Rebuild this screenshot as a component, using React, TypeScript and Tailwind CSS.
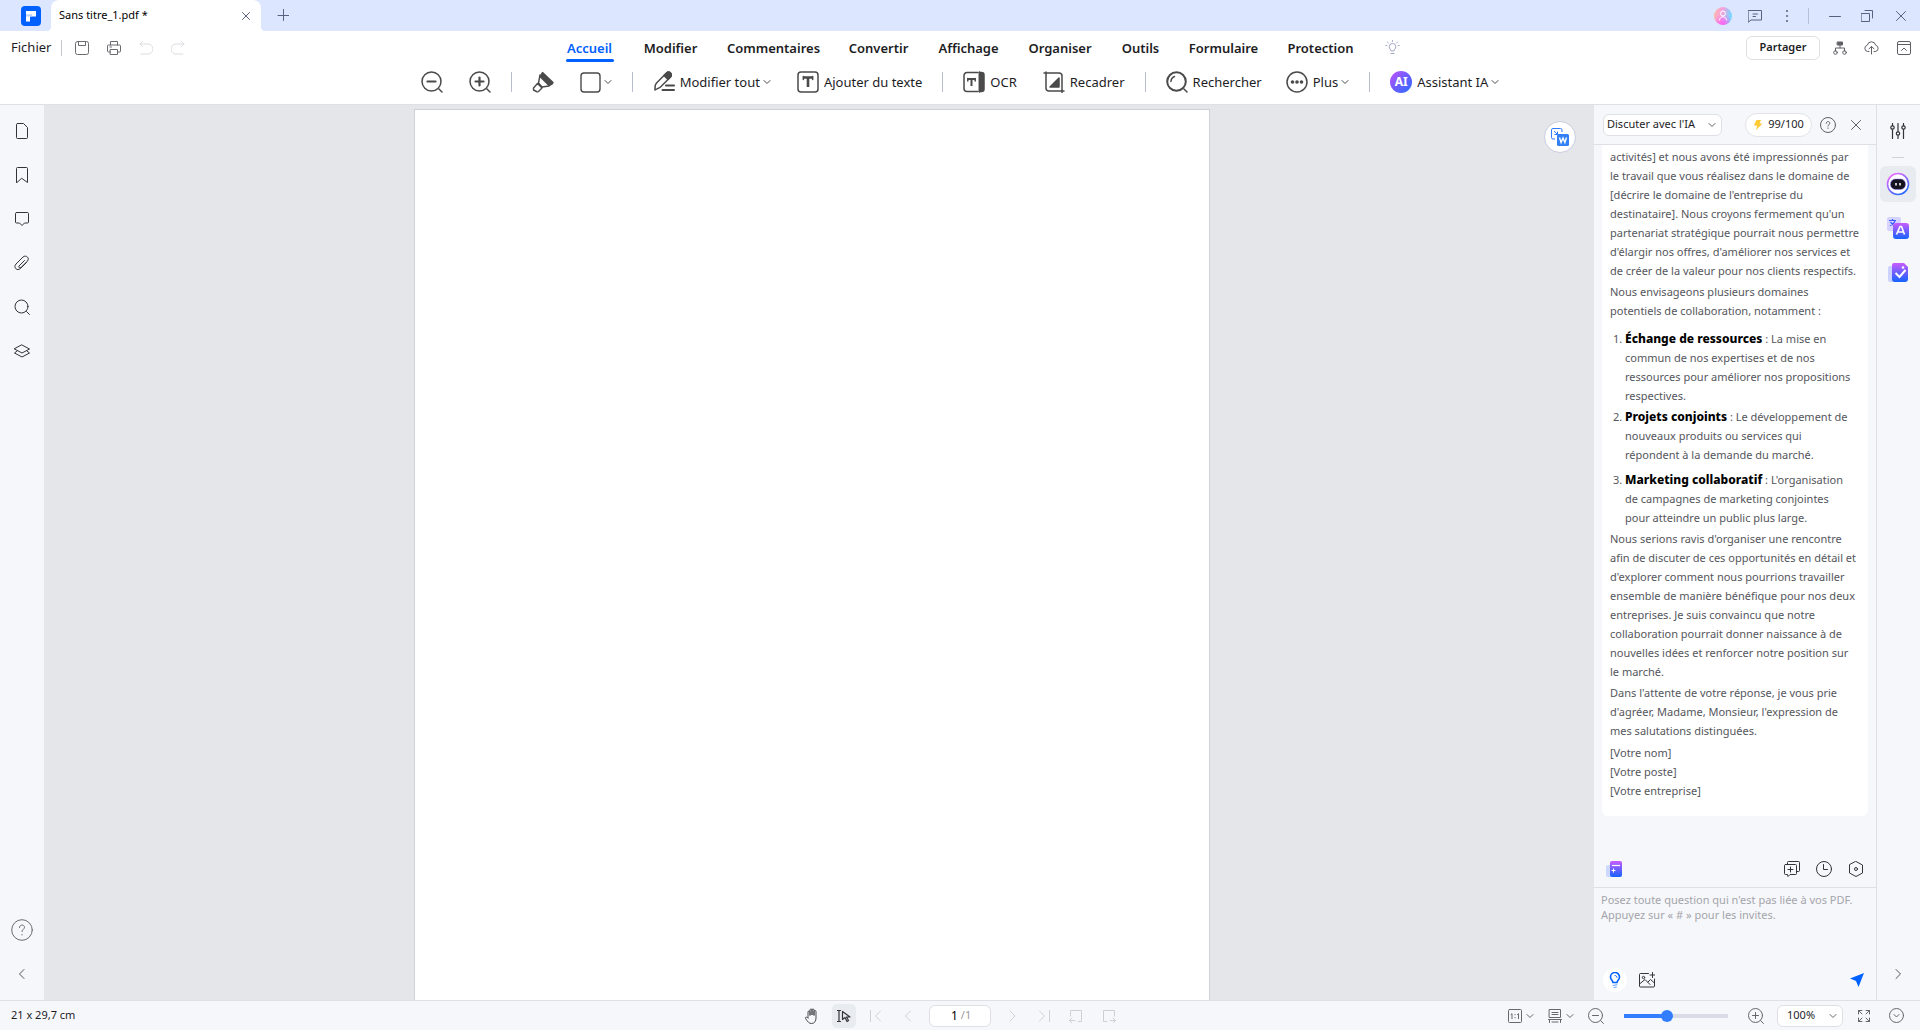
import React from "react";

type IconProps = {
  size?: number;
  box?: number;
  sw?: number;
  className?: string;
  children: React.ReactNode;
};

function Icon({ size = 16, box, sw = 1, className = "", children }: IconProps) {
  const b = box ?? size;
  return (
    <svg
      width={size}
      height={size}
      viewBox={`0 0 ${b} ${b}`}
      fill="none"
      stroke="currentColor"
      strokeWidth={sw}
      strokeLinecap="round"
      strokeLinejoin="round"
      className={`block shrink-0 ${className}`}
      aria-hidden="true"
    >
      {children}
    </svg>
  );
}

function Chevron({ className = "" }: { className?: string }) {
  return (
    <Icon size={8} className={className}>
      <path d="M1 2.5 4 5.5 7 2.5" />
    </Icon>
  );
}

type ToolProps = { label: string; text?: string; menu?: boolean; children: React.ReactNode };

function Tool({ label, text, menu, children }: ToolProps) {
  return (
    <button type="button" aria-label={label} className="flex h-8 items-center whitespace-nowrap text-[#4a4a4a]">
      {children}
      {text && <span className="ml-[5px] text-[13px] leading-5 text-[#1d1d1f]">{text}</span>}
      {menu && <Chevron className="ml-[3px]" />}
    </button>
  );
}

function Separator() {
  return <div className="h-5 w-px bg-[#b9bdcb]" />;
}

const tabs: { name: string; width: string }[] = [
  { name: "Accueil", width: "w-[77px]" },
  { name: "Modifier", width: "w-[85px]" },
  { name: "Commentaires", width: "w-[121px]" },
  { name: "Convertir", width: "w-[89px]" },
  { name: "Affichage", width: "w-[91px]" },
  { name: "Organiser", width: "w-[92px]" },
  { name: "Outils", width: "w-[69px]" },
  { name: "Formulaire", width: "w-[97px]" },
  { name: "Protection", width: "w-[97px]" },
];

function TitleBar() {
  return (
    <header className="flex h-[31px] shrink-0 items-stretch bg-[#dde6ff] text-[#596080]">
      <div className="flex w-[51px] items-center justify-end pr-[10px]">
        <svg width="20" height="20" viewBox="0 0 20 20" aria-label="PDFelement" className="mt-px">
          <rect width="20" height="20" rx="4" fill="#0061ff" />
          <path d="M5 5h10v5.500H9v5H5z" fill="#fff" />
          <path d="M5 8.300h6v2.200H5z" fill="#b9d2ff" />
        </svg>
      </div>
      <div className="relative flex w-[210px] items-center justify-between rounded-t-lg bg-white pl-2 pr-[9px]">
        <span className="absolute bottom-0 -left-1 h-1 w-1 bg-[radial-gradient(circle_at_0_0,#dde6ff_4px,white_4px)]" />
        <span className="absolute bottom-0 -right-1 h-1 w-1 bg-[radial-gradient(circle_at_100%_0,#dde6ff_4px,white_4px)]" />
        <span className="text-[11px] text-black">Sans titre_1.pdf *</span>
        <button type="button" aria-label="Fermer l'onglet">
          <Icon size={12}><path d="m2.500 2.500 7 7m0-7-7 7" /></Icon>
        </button>
      </div>
      <button type="button" aria-label="Nouvel onglet" className="ml-4 pb-px">
        <Icon size={12}><path d="M6.500 .5v11M1 6.500h11" /></Icon>
      </button>
      <div className="ml-auto flex items-center pr-[13px]">
        <button type="button" aria-label="Compte">
          <svg width="18" height="18" viewBox="0 0 18 18" fill="none">
            <defs>
              <linearGradient id="av" x1="0" y1="0" x2="1" y2="0.2">
                <stop offset="0" stopColor="#ffb9a0" />
                <stop offset="0.5" stopColor="#f5a0e0" />
                <stop offset="1" stopColor="#78d8ff" />
              </linearGradient>
              <radialGradient id="av2" cx="0.5" cy="1" r="0.6">
                <stop offset="0" stopColor="#ff5cf4" />
                <stop offset="1" stopColor="#ff5cf4" stopOpacity="0" />
              </radialGradient>
            </defs>
            <circle cx="9" cy="9" r="9" fill="url(#av)" />
            <circle cx="9" cy="9" r="9" fill="url(#av2)" />
            <circle cx="9" cy="6.500" r="2.500" stroke="#fff" />
            <path d="M5.500 13c0-4.500 7-4.500 7 0" stroke="#fff" strokeLinecap="round" />
          </svg>
        </button>
        <button type="button" aria-label="Messages" className="ml-4">
          <Icon size={14}>
            <path d="M.5 1.500h13v9.500H3L.5 13zM5 5h4.500M5 7.500h2.500" />
          </Icon>
        </button>
        <button type="button" aria-label="Menu" className="ml-[17px]">
          <Icon size={16}>
            <g fill="currentColor" stroke="none">
              <rect x="7" y="2" width="2" height="2" rx="1" /><rect x="7" y="7" width="2" height="2" rx="1" /><rect x="7" y="12" width="2" height="2" rx="1" />
            </g>
          </Icon>
        </button>
        <div className="ml-[13px] h-4 w-px bg-[#b9bfd6]" />
        <button type="button" aria-label="Réduire" className="ml-5">
          <Icon size={12}><path d="M.5 6.500h11" /></Icon>
        </button>
        <button type="button" aria-label="Restaurer" className="ml-5">
          <Icon size={12}>
            <path d="M.5 3.500h8v8h-8zM4 .5h7.500V8" />
          </Icon>
        </button>
        <button type="button" aria-label="Fermer" className="ml-[22px]">
          <Icon size={12}><path d="m1.500 1.500 9 9m0-9-9 9" /></Icon>
        </button>
      </div>
    </header>
  );
}

function MenuRow() {
  return (
    <div className="grid h-[33px] grid-cols-[1fr_auto_1fr] items-center">
      <div className="flex items-center pl-[11px] text-[#6b6b70]">
        <button type="button" className="text-[13px] text-[#1d1d1f]">Fichier</button>
        <div className="ml-[10px] h-4 w-px bg-[#c4c6cc]" />
        <button type="button" aria-label="Enregistrer" className="ml-[13px]">
          <Icon size={14}><rect x=".5" y=".5" width="13" height="13" rx="2" /><path d="M3.500.5v4h7v-4M7 4.500h0" /></Icon>
        </button>
        <button type="button" aria-label="Imprimer" className="ml-[18px]">
          <Icon size={14}>
            <path d="M3.500 4V.5h7V4M3.500 11h-2a1 1 0 0 1-1-1V5a1 1 0 0 1 1-1h11a1 1 0 0 1 1 1v5a1 1 0 0 1-1 1h-2M3.500 8.500h7v5h-7zM3 6h1.500" />
          </Icon>
        </button>
        <button type="button" aria-label="Annuler" className="ml-[18px] text-[#dcdde0]">
          <Icon size={14}><path d="M3.500.5 1 3l2.500 2.500M1 3h8a5 5 0 0 1 0 10H2" /></Icon>
        </button>
        <button type="button" aria-label="Rétablir" className="ml-[18px] text-[#dcdde0]">
          <Icon size={14}><path d="M10.500.5 13 3l-2.500 2.500M13 3H5a5 5 0 0 0 0 10h7" /></Icon>
        </button>
      </div>
      <nav className="flex items-center pl-12">
        {tabs.map((t, i) => (
          <button
            key={t.name}
            type="button"
            className={`flex h-[33px] flex-col items-center pt-2 text-[13px] leading-[18px] font-semibold ${t.width} ${i === 0 ? "text-[#0061ff]" : "text-[#1d1d1f]"}`}
          >
            {t.name}
            {i === 0 && <span className="mt-[2px] h-[3px] w-12 rounded-full bg-[#0061ff]" />}
          </button>
        ))}
        <button type="button" aria-label="Astuces" className="flex w-12 justify-center pr-[2px] text-[#a3a6c4]">
          <Icon size={15}>
            <path d="M6 10.500c0-1-1.800-1.700-1.800-3.700a3.300 3.300 0 0 1 6.600 0c0 2-1.800 2.700-1.800 3.700zM6 13.500h3M7.500.5v1M2.500 2.200l.8.7M12.500 2.200l-.8.7M.8 5.500h1M13.200 5.500h1" />
          </Icon>
        </button>
      </nav>
      <div className="flex items-center justify-end pr-[9px] text-[#5f6066]">
        <button type="button" className="h-6 w-[74px] rounded-md border border-[#dfe0e4] text-[11px] font-semibold text-[#1d1d1f]">Partager</button>
        <button type="button" aria-label="Partage en équipe" className="ml-[13px]">
          <Icon size={14}>
            <rect x="4.500" y="1" width="5" height="3" fill="currentColor" /><path d="M7 4v3M2.500 10V7h9v3" />
            <circle cx="2.500" cy="11.500" r="1.800" /><circle cx="11.500" cy="11.500" r="1.800" />
          </Icon>
        </button>
        <button type="button" aria-label="Envoyer vers le cloud" className="ml-[17px]">
          <Icon size={15}>
            <path d="M5 11.500H3.800a3.200 3.200 0 0 1-.5-6.300 4.300 4.300 0 0 1 8.400 0 3.200 3.200 0 0 1-.5 6.300H10M7.500 14V6.500M5 8.800l2.500-2.300L10 8.800" />
          </Icon>
        </button>
        <button type="button" aria-label="Masquer le ruban" className="ml-[18px]">
          <Icon size={14}><rect x=".5" y=".5" width="13" height="13" rx="1.500" /><path d="M.5 3.500h13M4.500 9.500 7 7l2.500 2.500" /></Icon>
        </button>
      </div>
    </div>
  );
}

function ToolRow() {
  return (
    <div className="flex h-9 items-center justify-center gap-5">
      <div className="flex gap-[26px]">
        <Tool label="Zoom arrière"><Icon size={22} sw={1.5}><circle cx="10.500" cy="10.500" r="9.500" /><path d="m18 18 3 3" /><path d="M6.500 10.500h8" strokeWidth="2.200" /></Icon></Tool>
        <Tool label="Zoom avant"><Icon size={22} sw={1.5}><circle cx="10.500" cy="10.500" r="9.500" /><path d="m18 18 3 3" /><path d="M6.500 10.500h8M10.500 6.500v8" strokeWidth="2.200" /></Icon></Tool>
      </div>
      <Separator />
      <div className="flex gap-[26px]">
        <Tool label="Surligner">
          <Icon size={22} sw={1.4}>
            <path d="M10.500 1.500 21 11.500l-1 1.500-3 1.500L8 5.500z" fill="currentColor" />
            <path d="M8 4 6.500 12l3.500 4 7-1M5.500 12.500 10 17l-3.500 3.500c-.8.500-1.500.5-2 0L1.500 19v-2z" />
          </Icon>
        </Tool>
        <Tool label="Forme" menu><Icon size={21} sw={1.4}><rect x="1" y="1" width="19" height="19" rx="3" /></Icon></Tool>
      </div>
      <Separator />
      <div className="flex gap-[26px]">
        <Tool label="Modifier tout" text="Modifier tout" menu>
          <Icon size={22} sw={1.500}>
            <path d="M2 17c0-2 .5-4 1.500-5L13.500 2a2.800 2.800 0 0 1 4 4L7.500 16c-2 1.500-4 2-5.500 3z" />
            <path d="m11 4.500 2.500-2.500a2.800 2.800 0 0 1 4 4L15 8.500z" fill="currentColor" />
            <path d="M13 14.500h8M9.500 19h11.500" strokeWidth="2" />
          </Icon>
        </Tool>
        <Tool label="Ajouter du texte" text="Ajouter du texte">
          <Icon size={22} sw={1.500}>
            <rect x="1" y="1" width="20" height="20" rx="3" /><path d="M6.500 6.500h9M11 6.500v9.500" strokeWidth="2.600" strokeLinecap="butt" /><path d="M6.300 5.500v3M15.700 5.500v3" />
          </Icon>
        </Tool>
      </div>
      <Separator />
      <div className="flex gap-[26px]">
        <Tool label="OCR" text="OCR">
          <Icon size={22} sw={1.500}>
            <path d="M15 1.500H4a3 3 0 0 0-3 3v13a3 3 0 0 0 3 3h11" /><path d="M4.500 8h8M8.500 8v7" strokeWidth="2" strokeLinecap="butt" /><path d="M4.800 7.500V10M12.200 7.500V10" />
            <path d="M16.500 1v20" /><path d="M16.500 1.500h2c1.500 0 2.500 1 2.500 2.500v14c0 1.500-1 2.500-2.500 2.500h-2z" fill="currentColor" />
          </Icon>
        </Tool>
        <Tool label="Recadrer" text="Recadrer">
          <Icon size={22} sw={1.500}>
            <path d="M1 2h15c2 0 3 1 3 3v16.500M3 1v16c0 1.500 1 3 3 3h15" /><path d="M16 7v9H7z" fill="currentColor" />
          </Icon>
        </Tool>
      </div>
      <Separator />
      <div className="flex gap-6">
        <Tool label="Rechercher" text="Rechercher">
          <Icon size={22} sw={1.500}><circle cx="10.500" cy="10.500" r="9.300" strokeWidth="2" /><path d="m18 18 3 3M5 10.500A5.500 5.500 0 0 1 8.500 5.500" /></Icon>
        </Tool>
        <Tool label="Plus" text="Plus" menu>
          <Icon size={22} sw={1.500}><circle cx="11" cy="11" r="10" /><g fill="currentColor" stroke="none"><circle cx="6.500" cy="11" r="1.800" /><circle cx="11" cy="11" r="1.800" /><circle cx="15.500" cy="11" r="1.800" /></g></Icon>
        </Tool>
      </div>
      <Separator />
      <Tool label="Assistant IA" text="Assistant IA" menu>
        <span className="flex size-[22px] items-center justify-center rounded-full bg-linear-to-br from-[#c54bff] via-[#6a5cff] to-[#0a6cff] text-xs font-bold text-white">AI</span>
      </Tool>
    </div>
  );
}

function LeftRail() {
  const items: [string, React.ReactNode][] = [
    ["Miniatures", <path d="M3.500.5h6l4 4v10a1 1 0 0 1-1 1h-9a1 1 0 0 1-1-1v-13a1 1 0 0 1 1-1" />],
    ["Signets", <path d="M2.500 15.500V1.500a1 1 0 0 1 1-1h9a1 1 0 0 1 1 1v14L8 11.500z" />],
    ["Commentaires", <path d="M2.500 1.500h11a1 1 0 0 1 1 1v8.500a1 1 0 0 1-1 1h-3L8 14.500 5.500 12h-3a1 1 0 0 1-1-1V2.500a1 1 0 0 1 1-1z" />],
    ["Pièces jointes", <path d="M10.500 5.500 5 11c-1 1.500 1 2.500 2 1.500l6.500-6.500c2.500-3-1.500-6.500-4.500-4L2 9c-3 3.500 1 7.500 4.500 4.500l6-6" />],
    ["Rechercher", <><circle cx="7.500" cy="7.500" r="6.500" /><path d="m12.500 12.500 3 3" /></>],
    ["Calques", <path d="m8 2 7.500 4L8 10 .5 6zM3 8 .5 10 8 14l7.500-4L13 8" />],
  ];
  return (
    <aside className="flex w-11 shrink-0 flex-col items-center bg-[#f6f7fb] pt-[18px] text-[#333437]">
      <div className="flex flex-col gap-7">
        {items.map(([label, path]) => (
          <button key={label} type="button" aria-label={label}><Icon size={16}>{path}</Icon></button>
        ))}
      </div>
      <button type="button" aria-label="Aide" className="mt-auto text-[#6b6c72]">
        <Icon size={22}><circle cx="11" cy="11" r="10.300" /><path d="M8.500 8.500c0-3.500 5-3 5-.3 0 2-2.500 2-2.500 4.300M11 15.500v.5" /></Icon>
      </button>
      <button type="button" aria-label="Réduire le panneau" className="mt-[26px] mb-[19px] text-[#55565c]">
        <Icon size={14}><path d="M9 2.500 4.500 7 9 11.500" /></Icon>
      </button>
    </aside>
  );
}

function Workspace() {
  return (
    <main className="relative flex min-w-0 flex-1 justify-center bg-[#e5e6ea] pt-1">
      <div className="mr-[14px] w-[796px] border border-b-0 border-[#ced2d8] bg-white" />
      <button
        type="button"
        aria-label="Convertir en Word"
        className="absolute top-4 right-[18px] flex size-8 items-center justify-center rounded-full border border-[#c9cce0] bg-white"
      >
        <svg width="18" height="18" viewBox="0 0 18 18" fill="none" aria-hidden="true">
          <path d="M11 4V2a1.500 1.500 0 0 0-1.500-1.500H2A1.500 1.500 0 0 0 .5 2v7.500A1.500 1.500 0 0 0 2 11h2" stroke="#2f7bff" />
          <path d="m3 3 3.500 3.500M6.500 3.500v3h-3" stroke="#2f7bff" />
          <rect x="6" y="6" width="12" height="12" rx="1.500" fill="#3380f5" />
          <path d="m8.500 9.500 1.600 5L12 10l1.900 4.500 1.600-5" stroke="#fff" strokeWidth="1.400" />
        </svg>
      </button>
    </main>
  );
}

function AssistantPanel() {
  return (
    <section className="flex w-[283px] shrink-0 flex-col border-r border-[#dfe0e5] bg-[#f6f7fb]">
      <div className="flex h-10 shrink-0 items-center border-b border-[#dfe0e5] pl-[9px] text-[#5f6066]">
        <div className="relative w-[119px]">
          <select
            aria-label="Mode de l'assistant"
            className="block h-[22px] w-full appearance-none rounded-md border border-[#dfe0e5] bg-white pl-[3px] text-[11px] text-[#1d1d1f]"
            defaultValue="ia"
          >
            <option value="ia">Discuter avec l'IA</option>
          </select>
          <Chevron className="pointer-events-none absolute top-[7px] right-[6px]" />
        </div>
        <div className="ml-[23px] flex h-6 w-[67px] items-center justify-center gap-[5px] rounded-full border border-[#e2e3e8] bg-white text-[11px] text-[#1d1d1f]">
          <svg width="10" height="10" viewBox="0 0 10 10" aria-hidden="true"><path d="M3.500 0H8L6.500 3.500H9.500L3 10l1.200-4.500H.8z" fill="#ffc933" /></svg>
          99/100
        </div>
        <button type="button" aria-label="Aide de l'assistant" className="ml-2">
          <Icon size={16}><circle cx="8" cy="8" r="7.500" /><path d="M6.200 6.300c0-2.500 3.600-2.200 3.600-.2 0 1.400-1.800 1.500-1.800 3M8 11v.4" /></Icon>
        </button>
        <button type="button" aria-label="Fermer le panneau" className="ml-[14px]">
          <Icon size={12}><path d="m1.500 1.500 9 9m0-9-9 9" /></Icon>
        </button>
      </div>
      <div className="min-h-0 flex-1 overflow-hidden px-2">
        <article className="rounded-b-md bg-white pt-[2px] pr-[6px] pb-4 pl-2 text-[11px] leading-[19px] text-[#55565c]">
          <p>activités] et nous avons été impressionnés par<br />le travail que vous réalisez dans le domaine de<br />[décrire le domaine de l'entreprise du<br />destinataire]. Nous croyons fermement qu'un<br />partenariat stratégique pourrait nous permettre<br />d'élargir nos offres, d'améliorer nos services et<br />de créer de la valeur pour nos clients respectifs.</p>
          <p className="mt-[2px]">Nous envisageons plusieurs domaines<br />potentiels de collaboration, notamment :</p>
          <ol className="mt-[9px] list-decimal pl-[15px]">
            <li><strong className="text-xs leading-[18px] font-extrabold text-black">Échange de ressources</strong> : La mise en<br />commun de nos expertises et de nos<br />ressources pour améliorer nos propositions<br />respectives.</li>
            <li className="mt-[2px]"><strong className="text-xs leading-[18px] font-extrabold text-black">Projets conjoints</strong> : Le développement de<br />nouveaux produits ou services qui<br />répondent à la demande du marché.</li>
            <li className="mt-[6px]"><strong className="text-xs leading-[18px] font-extrabold text-black">Marketing collaboratif</strong> : L'organisation<br />de campagnes de marketing conjointes<br />pour atteindre un public plus large.</li>
          </ol>
          <p className="mt-[2px]">Nous serions ravis d'organiser une rencontre<br />afin de discuter de ces opportunités en détail et<br />d'explorer comment nous pourrions travailler<br />ensemble de manière bénéfique pour nos deux<br />entreprises. Je suis convaincu que notre<br />collaboration pourrait donner naissance à de<br />nouvelles idées et renforcer notre position sur<br />le marché.</p>
          <p className="mt-[2px]">Dans l'attente de votre réponse, je vous prie<br />d'agréer, Madame, Monsieur, l'expression de<br />mes salutations distinguées.</p>
          <p className="mt-[3px]">[Votre nom]<br />[Votre poste]<br />[Votre entreprise]</p>
        </article>
      </div>
      <div className="flex h-9 shrink-0 items-center border-b border-[#dfe0e5] pr-3 pb-px pl-3 text-[#333437]">
        <button type="button" aria-label="Invites">
          <svg width="16" height="16" viewBox="0 0 16 16" fill="none">
            <defs><linearGradient id="gr" x1="0" y1="0" x2="0" y2="1"><stop offset="0" stopColor="#c95bff" /><stop offset="1" stopColor="#1463ff" /></linearGradient></defs>
            <rect x="0" y="4" width="8" height="12" rx="2" fill="#cdd8ff" />
            <rect x="4" y="0" width="12" height="16" rx="2" fill="url(#gr)" />
            <path d="M6 4.500h8" stroke="#fff" strokeWidth="1.200" /><path d="M7.500 7.500v4M5.500 9.500h4" stroke="#fff" />
          </svg>
        </button>
        <button type="button" aria-label="Nouvelle discussion" className="ml-auto">
          <Icon size={16}><path d="M3.500 3.500V1.500a1 1 0 0 1 1-1h10a1 1 0 0 1 1 1v8a1 1 0 0 1-1 1h-2M1.500 3.500h10a1 1 0 0 1 1 1v8a1 1 0 0 1-1 1H6L4 15.500l-.5-2h-2a1 1 0 0 1-1-1v-8a1 1 0 0 1 1-1zM6.500 6v5M4 8.500h5" /></Icon>
        </button>
        <button type="button" aria-label="Historique" className="ml-4">
          <Icon size={16}><circle cx="8" cy="8" r="7.500" /><path d="M7.500 3.500v5h4" /></Icon>
        </button>
        <button type="button" aria-label="Paramètres" className="ml-4">
          <Icon size={16}><path d="m8 .5 6.500 3.500v8L8 15.500 1.500 12V4z" /><circle cx="8" cy="8" r="1.500" /></Icon>
        </button>
      </div>
      <div className="flex h-28 shrink-0 flex-col">
        <textarea
          aria-label="Question"
          className="min-h-0 w-full flex-1 resize-none bg-transparent pt-1 pl-[7px] text-[11px] leading-[15px] outline-none placeholder:text-[#a4a5aa]"
          placeholder={"Posez toute question qui n'est pas liée à vos PDF.\nAppuyez sur « # » pour les invites."}
        />
        <div className="flex h-10 items-center pr-3 pl-[9px]">
          <button type="button" aria-label="Idées" className="flex size-6 items-center justify-center rounded-full bg-white">
            <svg width="16" height="16" viewBox="0 0 16 16" fill="none" stroke="#0061ff" strokeLinecap="round">
              <path d="M6 10.500C6 8.500 3.500 8 3.500 5a4.500 4.500 0 0 1 9 0c0 3-2.500 3.500-2.500 5.500z" strokeWidth="1.600" /><path d="M8 3.500c1 0 2 .8 2 1.800" /><path d="m6 13.500 4-.8M7 15.500l2.500-.5" strokeOpacity=".6" />
            </svg>
          </button>
          <button type="button" aria-label="Ajouter une image" className="ml-3 text-[#333437]">
            <Icon size={16}><path d="M9.500 1.500h-8a1 1 0 0 0-1 1v11.500a1 1 0 0 0 1 1h13a1 1 0 0 0 1-1V7M13.500.5v5M11 3h5M.5 12 6 7.500l5 5M9 10l2.500-2.500 4 3.500" /><circle cx="4.500" cy="5.500" r="1.200" /></Icon>
          </button>
          <button type="button" aria-label="Envoyer" className="ml-auto">
            <svg width="14" height="14" viewBox="0 0 14 14"><path d="M14 0 8.500 14 6 8 0 5.500z" fill="#0061ff" /></svg>
          </button>
        </div>
      </div>
    </section>
  );
}

function RightRail() {
  return (
    <aside className="flex w-[43px] shrink-0 flex-col items-center bg-[#f6f7fb] pt-[18px] pr-[2px] text-[#333437]">
      <button type="button" aria-label="Propriétés">
        <Icon size={16} sw={1.200}>
          <path d="M2.500.5v2M2.500 6.500v9M8 .5v8M8 12.500v3M13.500.5v2M13.500 6.500v9" /><circle cx="2.500" cy="4.500" r="1.700" /><circle cx="8" cy="10.500" r="1.700" /><circle cx="13.500" cy="4.500" r="1.700" />
        </Icon>
      </button>
      <div className="mt-[18px] h-px w-3 bg-[#cfd1d6]" />
      <button type="button" aria-label="Assistant IA" className="mt-2 flex size-9 items-center justify-center rounded-md bg-[#e8ebf0]">
        <svg width="24" height="24" viewBox="0 0 24 24" fill="none">
          <defs>
            <linearGradient id="rg" x1="0.200" y1="0" x2="0.800" y2="1"><stop offset="0" stopColor="#ef6bff" /><stop offset="0.500" stopColor="#8a6bff" /><stop offset="1" stopColor="#1a6aff" /></linearGradient>
          </defs>
          <circle cx="12" cy="12" r="10.500" fill="#fff" stroke="url(#rg)" strokeWidth="1.600" />
          <rect x="4.500" y="7" width="15" height="10.500" rx="5" fill="#15131f" stroke="#8b7bff" strokeWidth=".5" />
          <path d="M10 11v2.500M14 11v2.500" stroke="#fff" strokeWidth="1.500" />
        </svg>
      </button>
      <button type="button" aria-label="Traduire" className="mt-[14px]">
        <svg width="24" height="24" viewBox="0 0 24 24" fill="none">
          <rect x="1" y="1" width="14" height="14" rx="2" fill="#d5d3ff" />
          <path d="M3 4.500h7M6.500 3v1.500M4 9.500c3-1.200 4.500-3 5-5M4.500 6c1 2 2.500 3 4.500 3.500" stroke="#3b5bff" strokeWidth="1.200" />
          <rect x="7" y="7" width="16" height="16" rx="3" fill="url(#gr)" />
          <path d="m10.500 18.500 3.500-8h1.500l3 8M12 16h5" stroke="#fff" strokeWidth="1.600" />
        </svg>
      </button>
      <button type="button" aria-label="Relecture" className="mt-5">
        <svg width="24" height="24" viewBox="0 0 24 24" fill="none">
          <rect x="2" y="6" width="12" height="16" rx="2" fill="#cdd3ff" />
          <path d="M8 3h10l4 4v12a3 3 0 0 1-3 3H9a3 3 0 0 1-3-3V5a2 2 0 0 1 2-2z" fill="url(#gr)" />
          <path d="m9.500 13 4 4 6-7" stroke="#fff" strokeWidth="2" /><circle cx="17" cy="7.500" r="1.200" fill="#fff" />
        </svg>
      </button>
      <button type="button" aria-label="Réduire la barre" className="mt-auto mb-[19px] text-[#55565c]">
        <Icon size={14}><path d="M5 2.500 9.500 7 5 11.500" /></Icon>
      </button>
    </aside>
  );
}

function StatusBar() {
  return (
    <footer className="grid h-[30px] shrink-0 grid-cols-[1fr_auto_1fr] items-center border-t border-[#dfe0e5] bg-[#f6f7fb] text-[11px] text-[#66676d]">
      <span className="pl-[11px] text-[#1d1d1f]">21 x 29,7 cm</span>
      <div className="flex items-center text-[#cfd0d5]">
        <button type="button" aria-label="Main" className="text-[#4a4b50]">
          <Icon size={16}><path d="M4 9.500V4a1 1 0 0 1 2 0v3.500V2a1 1 0 0 1 2 0v5V2a1 1 0 0 1 2 0v5.500V3.500a1 1 0 0 1 2 0V10c0 3-1.500 5.500-4.500 5.500C5 15.500 4 14 1.500 10.500 1 9 2.500 8.500 4 10z" /></Icon>
        </button>
        <button type="button" aria-label="Sélection" className="ml-3 flex size-6 items-center justify-center rounded-[5px] bg-[#e8ebf0] text-[#333437]">
          <Icon size={14} sw={1.200}><path d="M.5 1.500h3M.5 12.500h3M2 1.500v11M5.500 2.500v8L8 8.500l2 4 1.500-1-2-3.500H13z" /></Icon>
        </button>
        <button type="button" aria-label="Première page" className="ml-[14px]"><Icon size={12}><path d="M.5.5v11M10.500 1 5.500 6l5 5" /></Icon></button>
        <button type="button" aria-label="Page précédente" className="ml-5"><Icon size={12}><path d="M8.500 1 3.500 6l5 5" /></Icon></button>
        <label className="ml-[15px] flex h-[22px] w-[62px] items-center justify-center rounded-md border border-[#dfe0e5] bg-white text-[#9a9ba0]">
          <input aria-label="Page" defaultValue="1" className="w-[9px] bg-transparent text-right text-xs text-black outline-none" />
          <span className="pl-[3px]">/1</span>
        </label>
        <button type="button" aria-label="Page suivante" className="ml-[15px]"><Icon size={12}><path d="m4 1 5 5-5 5" /></Icon></button>
        <button type="button" aria-label="Dernière page" className="ml-5"><Icon size={12}><path d="M11.500.5v11M1.500 1l5 5-5 5" /></Icon></button>
        <button type="button" aria-label="Vue précédente" className="ml-[19px]"><Icon size={14}><path d="M1.500 7V1.500h11v11H9M6 11.500H.5M3 9l-2.500 2.500L3 14" /></Icon></button>
        <button type="button" aria-label="Vue suivante" className="ml-[19px]"><Icon size={14}><path d="M12.500 7V1.500h-11v11H5M8 11.500h5.500M11 9l2.500 2.500L11 14" /></Icon></button>
      </div>
      <div className="flex items-center justify-end pr-4">
        <button type="button" aria-label="Taille réelle" className="flex items-center gap-1">
          <Icon size={14}><rect x=".5" y=".5" width="13" height="13" rx="1" /><path d="m3 5.500 1-.8v5M7 5.500v.3M7 8.500v.3M9.500 5.500l1-.8v5" /></Icon>
          <Chevron />
        </button>
        <button type="button" aria-label="Affichage des pages" className="ml-[14px] flex items-center gap-1">
          <Icon size={14}><path d="M1.500.5h11v8h-11zM4 3.500h6M4 5.500h6M.5 10.500h13M1.500 10.500v3M12.500 10.500v3M4 13h6" /></Icon>
          <Chevron />
        </button>
        <button type="button" aria-label="Réduire le zoom" className="ml-[14px]">
          <Icon size={16}><circle cx="7.500" cy="7.500" r="7" /><path d="m12.500 12.500 3 3M4.500 7.500h6" /></Icon>
        </button>
        <input
          type="range"
          aria-label="Zoom"
          defaultValue={40}
          className="ml-5 h-3 w-[104px] appearance-none bg-[linear-gradient(to_right,#337dff_40%,#dadde8_40%)] bg-[length:100%_4px] bg-center bg-no-repeat [&::-webkit-slider-thumb]:size-3 [&::-webkit-slider-thumb]:appearance-none [&::-webkit-slider-thumb]:rounded-full [&::-webkit-slider-thumb]:bg-[#337dff]"
        />
        <button type="button" aria-label="Augmenter le zoom" className="ml-5">
          <Icon size={16}><circle cx="7.500" cy="7.500" r="7" /><path d="m12.500 12.500 3 3M4.500 7.500h6M7.500 4.500v6" /></Icon>
        </button>
        <div className="relative ml-[13px] w-[66px]">
          <select aria-label="Niveau de zoom" className="block h-[22px] w-full appearance-none rounded-md border border-[#dfe0e5] bg-white pl-[9px] text-[#1d1d1f]">
            <option>100%</option>
          </select>
          <Chevron className="pointer-events-none absolute top-[7px] right-[6px]" />
        </div>
        <button type="button" aria-label="Plein écran" className="ml-[14px]">
          <Icon size={14}><path d="M1.500 5V1.500H5M1.500 1.500 5 5M9 1.500h3.500V5M12.500 1.500 9 5M1.500 9v3.500H5M1.500 12.500 5 9M9 12.500h3.500V9M12.500 12.500 9 9" /></Icon>
        </button>
        <button type="button" aria-label="Plus d'options" className="ml-[18px]">
          <Icon size={15}><circle cx="7.500" cy="7.500" r="7" /><path d="m5 6.500 2.500 2.500L10 6.500" /></Icon>
        </button>
      </div>
    </footer>
  );
}

export default function App() {
  return (
    <div className="flex h-screen flex-col overflow-hidden bg-white font-['Noto_Sans','Open_Sans',sans-serif]">
      <TitleBar />
      <div className="h-[74px] shrink-0 border-b border-[#dfe0e5]">
        <MenuRow />
        <ToolRow />
      </div>
      <div className="flex min-h-0 flex-1">
        <LeftRail />
        <Workspace />
        <AssistantPanel />
        <RightRail />
      </div>
      <StatusBar />
    </div>
  );
}
